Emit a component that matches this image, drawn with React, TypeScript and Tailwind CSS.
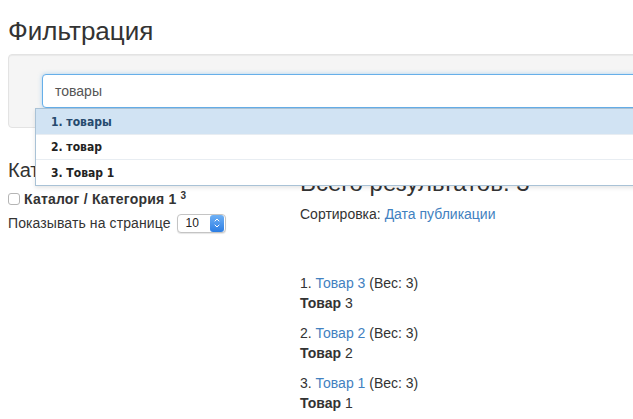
import { ChevronDown, ChevronUp } from "lucide-react"

const results = [
  { n: 1, name: "Товар 3", num: "3" },
  { n: 2, name: "Товар 2", num: "2" },
  { n: 3, name: "Товар 1", num: "1" },
]

const suggestions = [
  { label: "1. товары", active: true },
  { label: "2. товар", active: false },
  { label: "3. Товар 1", active: false },
]

export default function App() {
  return (
    <div className="relative w-[633px] h-[419px] overflow-hidden bg-white text-[#333] font-['Liberation_Sans',Arial,sans-serif] text-[14px] leading-5">
      <div className="w-[700px] pl-2">
        <h1 className="mt-[17px] mb-[8px] text-[26px] leading-[29px] font-normal text-[#333]">
          Фильтрация
        </h1>

        {/* well with search */}
        <div className="relative rounded border border-[#e3e3e3] bg-[#f5f5f5] py-[19px] pl-[33px] shadow-[inset_0_1px_1px_rgba(0,0,0,0.05)]">
          <div className="h-[34px] rounded border border-[#66afe9] bg-white pl-[12px] flex items-center text-[14px] text-[#555] shadow-[0_0_4px_rgba(102,175,233,0.5)]">
            товары
          </div>
        </div>

        <div className="grid grid-cols-[292px_1fr]">
          <div className="flex flex-col">
            <h3 className="mt-[31px] mb-[8px] text-[20px] leading-[22px] font-normal">Категории</h3>
            <label className="flex items-center gap-[4px] font-bold">
              <span className="w-[12px] h-[12px] rounded-[3px] border border-[#b5b5b5] bg-white" />
              <span className="tracking-[0.2px]">
                Каталог / Категория 1 <sup className="text-[10px]">3</sup>
              </span>
            </label>
            <div className="mt-[4px] flex items-center gap-[6px]">
              <span className="tracking-[0.1px]">Показывать на странице</span>
              <div className="flex h-[19px] w-[49px] items-center rounded-[4px] border border-[#c4c4c4] bg-white shadow-[0_1px_1px_rgba(0,0,0,0.1)]">
                <span className="flex-1 pl-[8px] text-[12px] leading-none text-[#222]">10</span>
                <span className="mr-[1px] flex h-[17px] w-[14px] flex-col items-center justify-center rounded-[3px] bg-gradient-to-b from-[#6fb1f5] to-[#2b7de3] text-white">
                  <ChevronUp size={8} strokeWidth={3} className="-mb-[2px]" />
                  <ChevronDown size={8} strokeWidth={3} />
                </span>
              </div>
            </div>
          </div>

          <div className="flex flex-col">
            <h2 className="mt-[42px] mb-[8px] text-[24px] leading-[26px] font-normal">Всего результатов: 3</h2>
            <p>
              Сортировка: <a className="text-[#4281c0]">Дата публикации</a>
            </p>
            <div className="mt-[49px] flex flex-col">
              {results.map((r) => (
                <div key={r.n} className="mb-[10px]">
                  <div>
                    {r.n}. <a className="text-[#4281c0]">{r.name}</a> (Вес: 3)
                  </div>
                  <div>
                    <b>Товар</b> {r.num}
                  </div>
                </div>
              ))}
            </div>
          </div>
        </div>
      </div>

      {/* autocomplete dropdown */}
      <div className="absolute left-[35px] top-[108px] w-[640px] border border-[#a9c2d6] bg-white shadow-[0_2px_4px_rgba(0,0,0,0.1)] font-['DejaVu_Sans_Condensed','DejaVu_Sans',Verdana,sans-serif] [font-stretch:condensed] text-[12px] font-bold">
        {suggestions.map((s, i) => (
          <div
            key={s.label}
            className={
              s.active
                ? "h-[25px] flex items-center pl-[15px] bg-[#d1e3f3] text-[#264a6e]"
                : "h-[25px] flex items-center pl-[15px] text-[#222] border-t border-[#e8edf2]" + (i === 2 ? " h-[26px]" : "")
            }
          >
            {s.label}
          </div>
        ))}
      </div>
    </div>
  )
}
